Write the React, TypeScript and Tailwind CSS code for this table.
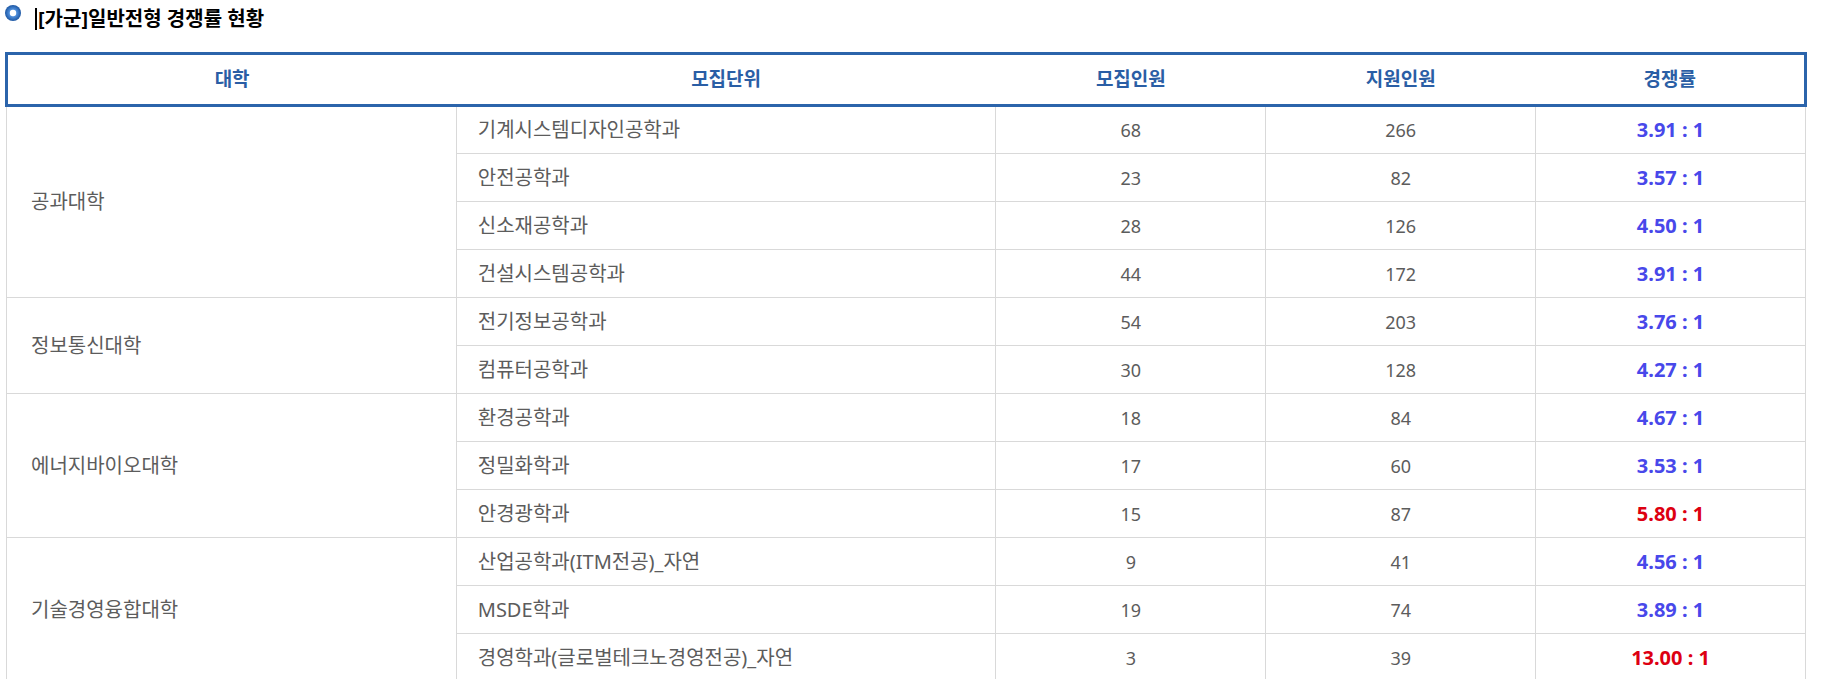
type Row = { unit: string; quota: number; applied: number; ratio: string };
type Group = { college: string; rows: Row[] };

const groups: Group[] = [
  {
    college: "공과대학",
    rows: [
      { unit: "기계시스템디자인공학과", quota: 68, applied: 266, ratio: "3.91" },
      { unit: "안전공학과", quota: 23, applied: 82, ratio: "3.57" },
      { unit: "신소재공학과", quota: 28, applied: 126, ratio: "4.50" },
      { unit: "건설시스템공학과", quota: 44, applied: 172, ratio: "3.91" },
    ],
  },
  {
    college: "정보통신대학",
    rows: [
      { unit: "전기정보공학과", quota: 54, applied: 203, ratio: "3.76" },
      { unit: "컴퓨터공학과", quota: 30, applied: 128, ratio: "4.27" },
    ],
  },
  {
    college: "에너지바이오대학",
    rows: [
      { unit: "환경공학과", quota: 18, applied: 84, ratio: "4.67" },
      { unit: "정밀화학과", quota: 17, applied: 60, ratio: "3.53" },
      { unit: "안경광학과", quota: 15, applied: 87, ratio: "5.80" },
    ],
  },
  {
    college: "기술경영융합대학",
    rows: [
      { unit: "산업공학과(ITM전공)_자연", quota: 9, applied: 41, ratio: "4.56" },
      { unit: "MSDE학과", quota: 19, applied: 74, ratio: "3.89" },
      { unit: "경영학과(글로벌테크노경영전공)_자연", quota: 3, applied: 39, ratio: "13.00" },
    ],
  },
];

function TitleIcon() {
  return (
    <svg width="16" height="16" viewBox="0 0 16 16" className="shrink-0">
      <defs>
        <radialGradient id="ring" cx="50%" cy="50%" r="50%">
          <stop offset="0%" stopColor="#a5cdf4" />
          <stop offset="50%" stopColor="#4b8bd8" />
          <stop offset="100%" stopColor="#1d57a3" />
        </radialGradient>
      </defs>
      <circle cx="8" cy="8" r="8" fill="url(#ring)" />
      <circle cx="8" cy="8" r="3.2" fill="#fff" />
    </svg>
  );
}

export default function App() {
  const th = "h-[52px] border-y-[3px] border-[#2b64ab] text-[19px] font-bold text-[#2a5ea5] text-center";
  const td = "h-[48px] border border-[#d9d9d9] text-[#5c5c5c] leading-[24px]";

  return (
    <div
      className="bg-white pl-[5px] pr-[16px] pt-[5px]"
      style={{ fontFamily: '"Noto Sans", "Noto Sans CJK KR", sans-serif' }}
    >
      <div className="flex items-start h-[47px]">
        <TitleIcon />
        <h2 className="ml-[14px] mt-[3px] border-l-2 border-black pl-px text-[20px] font-bold leading-[22px] text-black">
          [가군]일반전형 경쟁률 현황
        </h2>
      </div>

      <table className="w-full table-fixed border-collapse">
        <colgroup>
          <col className="w-[25%]" />
          <col className="w-[30%]" />
          <col className="w-[15%]" />
          <col className="w-[15%]" />
          <col className="w-[15%]" />
        </colgroup>
        <thead>
          <tr>
            <th className={`${th} border-l-[3px]`}>대학</th>
            <th className={th}>모집단위</th>
            <th className={th}>모집인원</th>
            <th className={th}>지원인원</th>
            <th className={`${th} border-r-[3px]`}>경쟁률</th>
          </tr>
        </thead>
        <tbody>
          {groups.map((g) =>
            g.rows.map((r, i) => (
              <tr key={r.unit}>
                {i === 0 && (
                  <td rowSpan={g.rows.length} className={`${td} pl-6 text-left text-[20px]`}>
                    {g.college}
                  </td>
                )}
                <td className={`${td} pl-[21px] text-left text-[20px]`}>{r.unit}</td>
                <td className={`${td} text-center text-[18px]`}>{r.quota}</td>
                <td className={`${td} text-center text-[18px]`}>{r.applied}</td>
                <td
                  className={`${td} text-center text-[20px] font-bold ${
                    parseFloat(r.ratio) >= 5 ? "text-[#dd0011]" : "text-[#4848ea]"
                  }`}
                >
                  {r.ratio} : 1
                </td>
              </tr>
            ))
          )}
        </tbody>
      </table>
    </div>
  );
}
